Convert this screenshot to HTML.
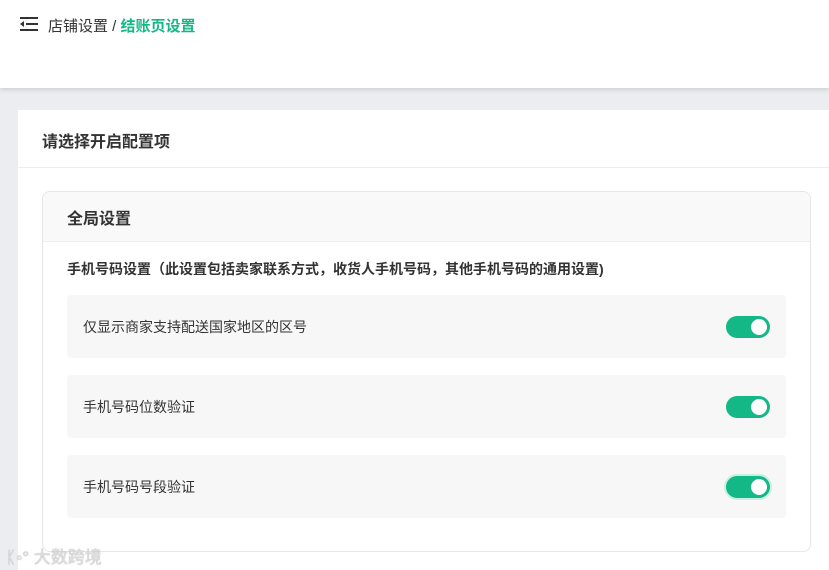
<!DOCTYPE html><html><head><meta charset="utf-8"><style>
*{margin:0;padding:0;box-sizing:border-box}
body{width:829px;height:570px;overflow:hidden;background:#ebedf0;font-family:"Liberation Sans","Noto Sans CJK SC",sans-serif;position:relative}
.hdr{position:absolute;left:0;top:0;width:829px;height:88px;background:#fff;box-shadow:0 2px 4px rgba(0,0,0,.12)}
.bc{position:absolute;left:48px;top:15px;font-size:15px;color:#333}
.bc b{color:#13b886;font-weight:bold}
.panel{position:absolute;left:18px;top:110px;width:811px;height:460px;background:#fff}
.pt{position:absolute;left:24px;top:18px;font-size:16px;color:#333;font-weight:bold}
.pl{position:absolute;left:0;top:57px;width:811px;height:1px;background:#eee}
.card{position:absolute;left:24px;top:81px;width:769px;height:361px;border:1px solid #e6e6e6;border-radius:8px;overflow:hidden}
.ch{height:50px;background:#f9f9f9;border-bottom:1px solid #eee;font-size:16px;color:#333;padding:13px 0 0 24px;font-weight:bold}
.st{position:absolute;left:24px;top:67px;font-size:14px;font-weight:bold;color:#333}
.row{position:absolute;left:24px;width:719px;height:63px;background:#f7f7f7;border-radius:4px;font-size:14px;color:#333;padding:22px 0 0 16px}
.tg{position:absolute;right:16px;top:21px;width:44px;height:22px;border-radius:11px;background:#13b886}
.tg:after{content:"";position:absolute;right:3px;top:3px;width:16px;height:16px;border-radius:50%;background:#fff}
</style></head><body>
<div class="hdr">
<svg style="position:absolute;left:20px;top:16px" width="18" height="16" viewBox="0 0 18 16"><rect x="0" y="1" width="18" height="2" fill="#333"/><rect x="6" y="7" width="12" height="2" fill="#333"/><rect x="0" y="13" width="18" height="2" fill="#333"/><path d="M0 8l4-3v6z" fill="#333"/></svg>
<div class="bc">店铺设置 / <b>结账页设置</b></div></div>
<div class="panel"><div class="pt">请选择开启配置项</div><div class="pl"></div>
<div class="card"><div class="ch">全局设置</div>
<div class="st">手机号码设置（此设置包括卖家联系方式，收货人手机号码，其他手机号码的通用设置)</div>
<div class="row" style="top:103px">仅显示商家支持配送国家地区的区号<div class="tg"></div></div>
<div class="row" style="top:183px">手机号码位数验证<div class="tg"></div></div>
<div class="row" style="top:263px">手机号码号段验证<div class="tg" style="box-shadow:0 0 0 2px #c8f0e2"></div></div>
</div></div>
<div style="position:absolute;left:6px;top:543px;font-size:17px;color:#ddd;text-shadow:0 0 1px #999">ᛕ◦° 大数跨境</div>
</body></html>
